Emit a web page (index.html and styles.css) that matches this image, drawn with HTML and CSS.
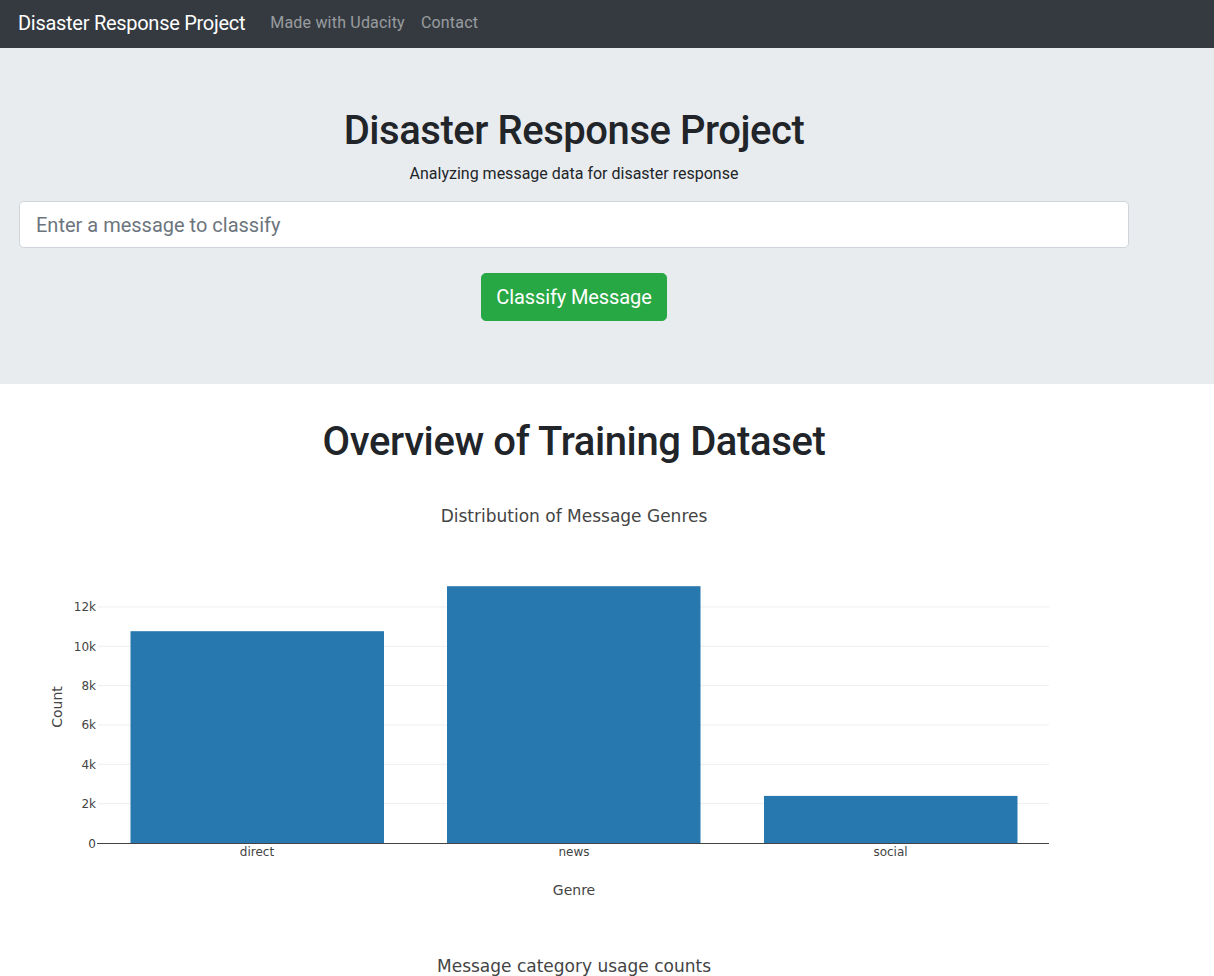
FILE: index.html
```html
<!DOCTYPE html>
<html lang="en">
<head>
<meta charset="utf-8">
<title>Disasters</title>
<link rel="stylesheet" href="styles.css">
</head>
<body>
<nav class="navbar">
  <a class="brand" href="#">Disaster Response Project</a>
  <ul class="nav">
    <li><a class="nav-link" href="#">Made with Udacity</a></li>
    <li><a class="nav-link" href="#">Contact</a></li>
  </ul>
</nav>

<header class="jumbotron">
  <div class="container">
    <h1 class="title">Disaster Response Project</h1>
    <p class="lead">Analyzing message data for disaster response</p>
    <form class="classify-form">
      <input class="form-control" type="text" name="query" placeholder="Enter a message to classify">
      <div class="btn-row">
        <button type="button" class="btn-classify">Classify Message</button>
      </div>
    </form>
  </div>
</header>

<main class="container">
  <h1 class="title overview">Overview of Training Dataset</h1>

  <svg class="chart" width="1110" height="450" viewBox="0 0 1110 450">
    <text class="ctitle" x="555" y="49" text-anchor="middle">Distribution of Message Genres</text>
    <g class="grid">
      <line x1="79" x2="1030" y1="330.65" y2="330.65"/>
      <line x1="79" x2="1030" y1="291.3" y2="291.3"/>
      <line x1="79" x2="1030" y1="251.95" y2="251.95"/>
      <line x1="79" x2="1030" y1="212.6" y2="212.6"/>
      <line x1="79" x2="1030" y1="173.25" y2="173.25"/>
      <line x1="79" x2="1030" y1="133.9" y2="133.9"/>
    </g>
    <g class="bars">
      <rect x="111.5" y="158.2" width="253.5" height="211.8"/>
      <rect x="428" y="113.2" width="253.5" height="256.8"/>
      <rect x="745" y="322.9" width="253.5" height="47.1"/>
    </g>
    <line class="zero" x1="78" x2="1030" y1="370.5" y2="370.5"/>
    <g class="ytick" text-anchor="end">
      <text x="77" y="374.5">0</text>
      <text x="77" y="335">2k</text>
      <text x="77" y="295.7">4k</text>
      <text x="77" y="256.3">6k</text>
      <text x="77" y="217">8k</text>
      <text x="77" y="177.6">10k</text>
      <text x="77" y="138.3">12k</text>
    </g>
    <g class="xtick" text-anchor="middle">
      <text x="238" y="383">direct</text>
      <text x="555" y="383">news</text>
      <text x="871.5" y="383">social</text>
    </g>
    <text class="axtitle" x="555" y="421.5" text-anchor="middle">Genre</text>
    <text class="axtitle" transform="translate(43,234) rotate(-90)" text-anchor="middle">Count</text>
  </svg>

  <svg class="chart" width="1110" height="450" viewBox="0 0 1110 450">
    <text class="ctitle" x="555" y="49" text-anchor="middle">Message category usage counts</text>
    <line class="zero" x1="78" x2="1030" y1="370.5" y2="370.5"/>
  </svg>
</main>
</body>
</html>
```

FILE: styles.css
```css
* { box-sizing: border-box; }

html, body {
  margin: 0;
  padding: 0;
}

body {
  font-family: Roboto, "Liberation Sans", Arial, sans-serif;
  font-size: 16px;
  line-height: 1.5;
  color: #212529;
  background: #fff;
}

a { text-decoration: none; }

.navbar {
  display: flex;
  align-items: center;
  height: 48px;
  padding: 0 0 3px 18px;
  background: #343a40;
}

.brand {
  font-size: 20px;
  line-height: 30px;
  letter-spacing: -0.28px;
  color: #fff;
  margin-right: 17px;
  white-space: nowrap;
}

.nav {
  display: flex;
  list-style: none;
  margin: 0;
  padding: 0;
}

.nav-link {
  display: block;
  padding: 0 8px;
  font-size: 16px;
  line-height: 24px;
  letter-spacing: 0.2px;
  color: rgba(255, 255, 255, 0.5);
}

.container {
  width: 1110px;
  margin-left: 19px;
}

.jumbotron {
  background: #e9ecef;
  padding: 59px 0 63px;
}

.title {
  margin: 0;
  font-size: 40px;
  font-weight: 500;
  line-height: 48px;
  letter-spacing: -0.45px;
  text-align: center;
  color: #212529;
}

.lead {
  margin: 7px 0 0;
  text-align: center;
  font-size: 16px;
  line-height: 24px;
}

.classify-form {
  margin-top: 15px;
}

.form-control {
  display: block;
  width: 100%;
  height: 47px;
  padding: 8px 16px;
  font-family: inherit;
  font-size: 20px;
  color: #495057;
  background: #fff;
  border: 1px solid #ced4da;
  border-radius: 4.8px;
  outline: none;
}

.form-control::placeholder {
  color: #6c757d;
}

.btn-row {
  display: flex;
  justify-content: center;
  margin-top: 25px;
}

.btn-classify {
  height: 48px;
  padding: 0 14.5px;
  font-family: inherit;
  font-size: 20px;
  letter-spacing: -0.1px;
  color: #fff;
  background: #28a745;
  border: 1px solid #28a745;
  border-radius: 4.8px;
  cursor: pointer;
}

.overview {
  margin-top: 34px;
  margin-bottom: 7px;
  letter-spacing: -0.38px;
}

.chart {
  display: block;
  font-family: "DejaVu Sans", Verdana, sans-serif;
}

.ctitle {
  font-size: 17px;
  fill: #444;
}

.grid line {
  stroke: #eee;
  stroke-width: 1;
}

.bars rect {
  fill: #2878b0;
}

.zero {
  stroke: #444;
  stroke-width: 1;
}

.ytick text,
.xtick text {
  font-size: 12px;
  fill: #444;
}

.axtitle {
  font-size: 14px;
  fill: #444;
}
```
